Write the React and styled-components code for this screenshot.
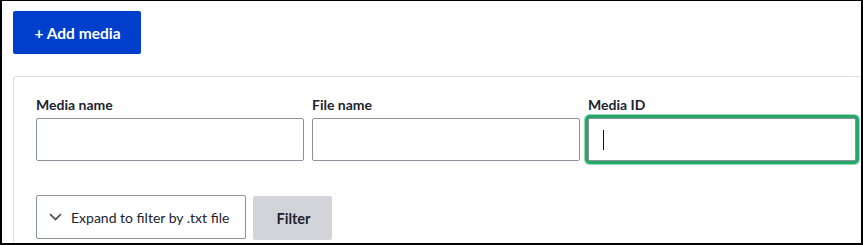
import React from "react";
import styled, { createGlobalStyle, css } from "styled-components";

const Global = createGlobalStyle`
  html, body { margin: 0; padding: 0; background: #fff; }
  * { box-sizing: border-box; }
  body { font-family: Lato, "Liberation Sans", sans-serif; color: #222330; }
`;

const Frame = styled.div`
  width: 863px;
  height: 245px;
  border-style: solid;
  border-color: #000;
  border-width: 1px 2px 2px 2px;
  overflow: hidden;
  padding: 10px 0 0 11px;
  background: #fff;
`;

const PrimaryButton = styled.button`
  display: flex;
  align-items: center;
  justify-content: center;
  width: 128px;
  height: 43px;
  padding: 0 0 0 1px;
  border: 0;
  border-radius: 2px;
  background: #003ecc;
  color: #fff;
  font-family: inherit;
  font-weight: 700;
  font-size: 15.5px;
  cursor: pointer;
`;

const Panel = styled.div`
  margin-top: 22px;
  margin-right: -40px;
  border: 1px solid #dedfe4;
  border-radius: 2px;
  padding: 19px 22px 30px 22px;
  background: #fff;
`;

const FieldRow = styled.div`
  display: flex;
  gap: 8px;
`;

const Field = styled.div`
  display: flex;
  flex-direction: column;
  width: 268px;
`;

const Label = styled.label`
  font-size: 14px;
  line-height: 18px;
  font-weight: 700;
  color: #222330;
  margin-bottom: 4px;
`;

const InputWrap = styled.div`
  position: relative;
  height: 43px;
`;

const TextInput = styled.input`
  width: 100%;
  height: 43px;
  border: 1px solid #8e929c;
  border-radius: 2px;
  padding: 0 14px;
  font-family: inherit;
  font-size: 14px;
  outline: none;
  background: #fff;
  ${(p) =>
    p.$focused &&
    css`
      box-shadow: 0 0 0 3px #26a769, 0 0 0 4px rgba(38, 167, 105, 0.45);
    `}
`;

const Caret = styled.span`
  position: absolute;
  left: 15px;
  top: 12px;
  width: 1px;
  height: 20px;
  background: #111;
`;

const ActionRow = styled.div`
  display: flex;
  align-items: flex-start;
  gap: 7px;
  margin-top: 34px;
`;

const Details = styled.div`
  display: flex;
  align-items: center;
  gap: 9px;
  width: 210px;
  height: 44px;
  padding: 0 0 0 12px;
  border: 1px solid #8e929c;
  border-radius: 2px;
  font-size: 14px;
  color: #222330;
`;

const FilterButton = styled.button`
  margin-top: 1px;
  width: 79px;
  height: 44px;
  padding: 0 0 0 2px;
  border: 0;
  border-radius: 2px;
  background: #d3d4d9;
  color: #222330;
  font-family: inherit;
  font-size: 14.5px;
  font-weight: 700;
  cursor: pointer;
`;

const Chevron = () => (
  <svg width="13" height="8" viewBox="0 0 13 8" fill="none">
    <path d="M1 1.2 L6.5 6.5 L12 1.2" stroke="#545560" strokeWidth="1.8" />
  </svg>
);

const fields = [
  { id: "name", label: "Media name" },
  { id: "file", label: "File name" },
  { id: "mid", label: "Media ID", focused: true },
];

export default function App() {
  return (
    <>
      <Global />
      <Frame>
        <PrimaryButton>+ Add media</PrimaryButton>
        <Panel>
          <FieldRow>
            {fields.map((f) => (
              <Field key={f.id}>
                <Label htmlFor={f.id}>{f.label}</Label>
                <InputWrap>
                  <TextInput id={f.id} type="text" $focused={f.focused} />
                  {f.focused && <Caret />}
                </InputWrap>
              </Field>
            ))}
          </FieldRow>
          <ActionRow>
            <Details>
              <Chevron />
              <span>Expand to filter by .txt file</span>
            </Details>
            <FilterButton>Filter</FilterButton>
          </ActionRow>
        </Panel>
      </Frame>
    </>
  );
}
